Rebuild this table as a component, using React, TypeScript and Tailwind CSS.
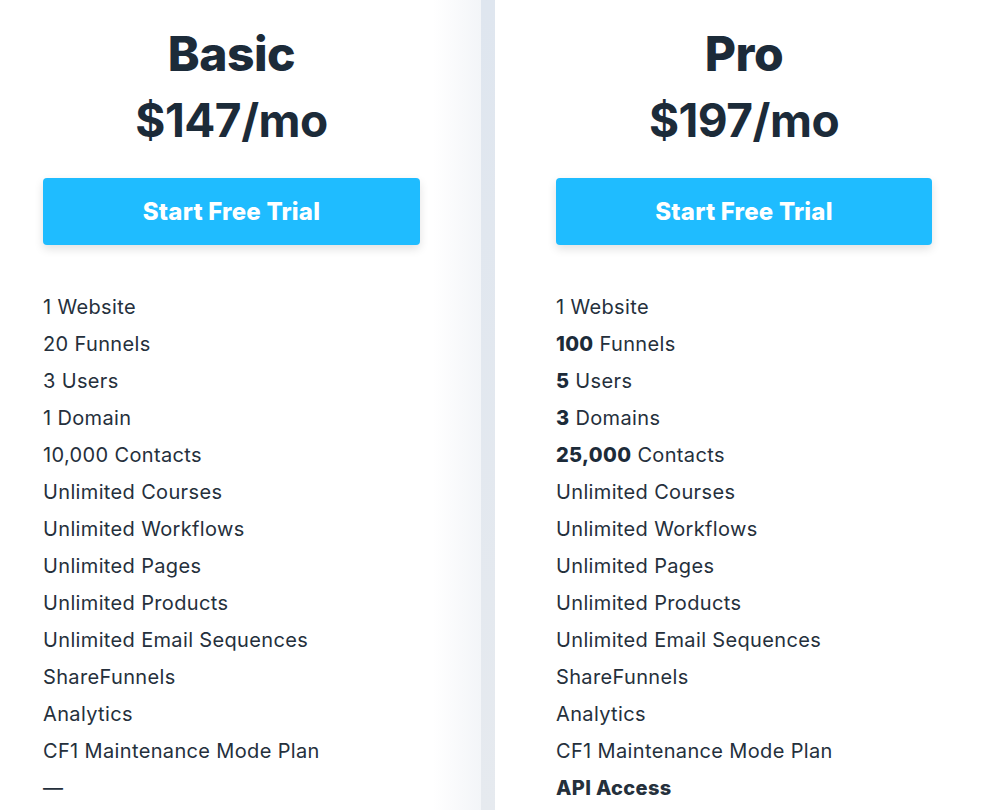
import React from 'react';

type Feature = { bold?: string; text: string; allBold?: boolean };

const basicFeatures: Feature[] = [
  { text: '1 Website' },
  { text: '20 Funnels' },
  { text: '3 Users' },
  { text: '1 Domain' },
  { text: '10,000 Contacts' },
  { text: 'Unlimited Courses' },
  { text: 'Unlimited Workflows' },
  { text: 'Unlimited Pages' },
  { text: 'Unlimited Products' },
  { text: 'Unlimited Email Sequences' },
  { text: 'ShareFunnels' },
  { text: 'Analytics' },
  { text: 'CF1 Maintenance Mode Plan' },
  { text: '—' },
];

const proFeatures: Feature[] = [
  { text: '1 Website' },
  { bold: '100', text: ' Funnels' },
  { bold: '5', text: ' Users' },
  { bold: '3', text: ' Domains' },
  { bold: '25,000', text: ' Contacts' },
  { text: 'Unlimited Courses' },
  { text: 'Unlimited Workflows' },
  { text: 'Unlimited Pages' },
  { text: 'Unlimited Products' },
  { text: 'Unlimited Email Sequences' },
  { text: 'ShareFunnels' },
  { text: 'Analytics' },
  { text: 'CF1 Maintenance Mode Plan' },
  { text: 'API Access', allBold: true },
];

const PlanColumn: React.FC<{ name: string; price: string; features: Feature[] }> = ({ name, price, features }) => (
  <div className="flex flex-col">
    <h2 className="text-center text-[48px] leading-[58px] font-extrabold text-[#1c2b39] mt-[25px] tracking-[-0.5px]">{name}</h2>
    <div className="text-center text-[46px] leading-[56px] font-bold text-[#1c2b39] mt-[9px] tracking-[-0.5px]">{price}</div>
    <button className="mt-[30px] h-[67px] w-full rounded-[4px] bg-[#1fbcff] text-white text-[24px] font-extrabold tracking-[0.2px] shadow-[0_4px_10px_rgba(0,0,0,0.12)]">
      Start Free Trial
    </button>
    <ul className="mt-[44px] flex flex-col">
      {features.map((f, i) => (
        <li
          key={i}
          className={`text-[20px] leading-[37px] tracking-[0.35px] text-[#25303c] ${f.allBold ? 'font-extrabold text-[#1c2b39]' : ''}`}
        >
          {f.bold && <span className="font-extrabold text-[#1c2b39]">{f.bold}</span>}
          {f.text}
        </li>
      ))}
    </ul>
  </div>
);

export default function App() {
  return (
    <div className="flex w-[987px] h-[810px] overflow-hidden bg-white font-['Inter',sans-serif]">
      <div className="w-[481px] shrink-0 pl-[43px] pr-[61px] bg-gradient-to-r from-white from-[90%] to-[#f3f5f8]">
        <PlanColumn name="Basic" price="$147/mo" features={basicFeatures} />
      </div>
      <div className="w-[14px] shrink-0 bg-gradient-to-b from-[#dfe6ef] to-[#e6eaef]" />
      <div className="flex-1 pl-[61px] pr-[55px]">
        <PlanColumn name="Pro" price="$197/mo" features={proFeatures} />
      </div>
    </div>
  );
}
